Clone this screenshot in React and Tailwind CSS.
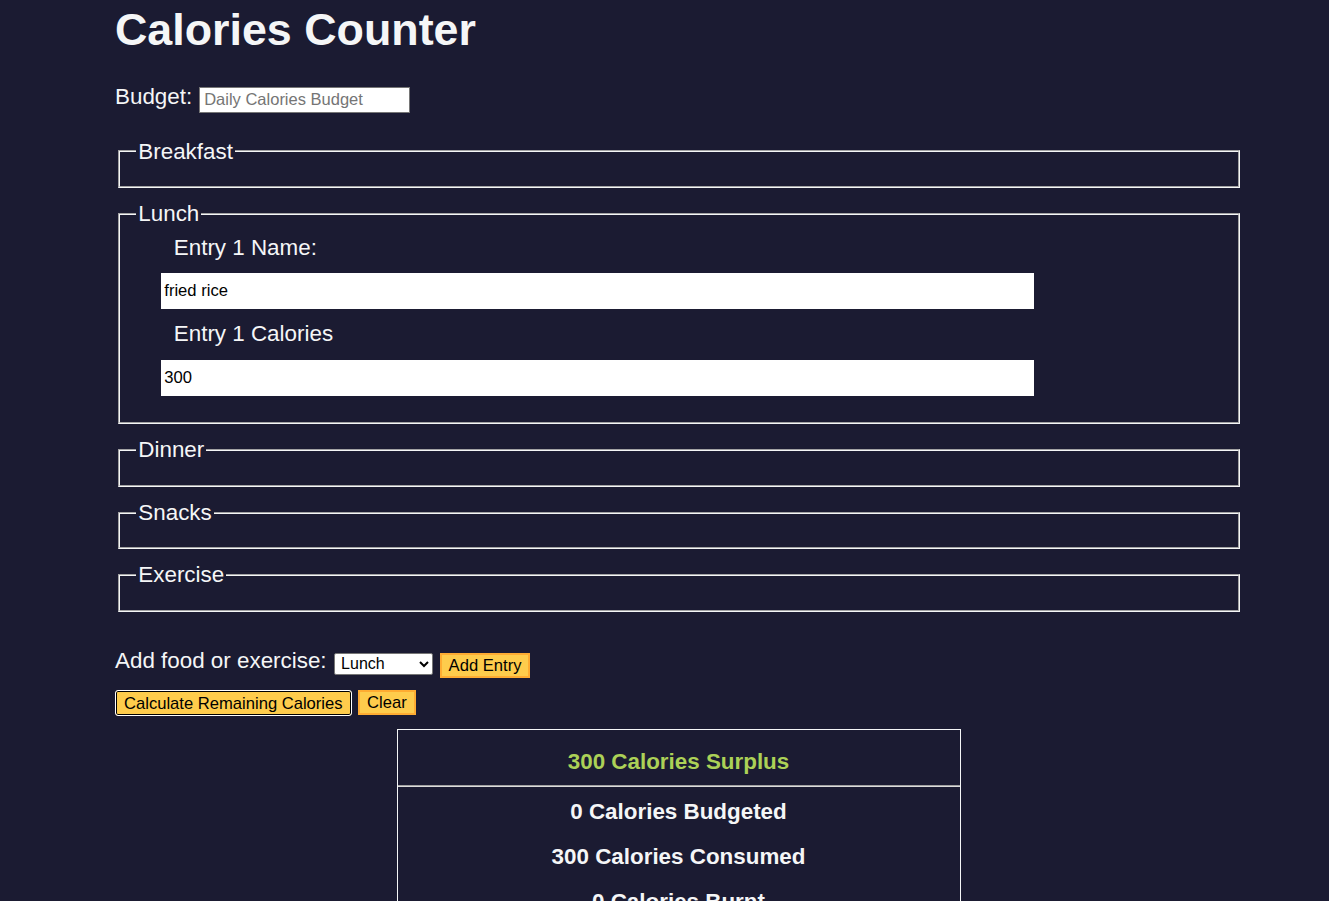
import React from "react";

function Section({ title, children }) {
  return (
    <fieldset className="mx-[2.5px] border-2 border-[#f5f6f7] [border-style:groove] pt-[7.84px] pb-[14px] px-[16.8px]">
      <legend className="px-[2px] text-[22.4px] leading-[25.76px]">{title}</legend>
      {children}
    </fieldset>
  );
}

export default function App() {
  return (
    <div
      className="min-h-screen bg-[#1b1b32] text-[#f5f6f7] overflow-hidden"
      style={{ fontFamily: '"Liberation Sans", Arial, sans-serif' }}
    >
      <div className="ml-[115px] w-[1127px] pb-[40px]">
        <h1 className="mt-[3.5px] text-[44.8px] leading-[51.5px] font-bold">Calories Counter</h1>

        <div className="mt-[28.5px] flex items-start">
          <label className="text-[22.4px] leading-[25.76px]">Budget:</label>
          <input
            type="number"
            placeholder="Daily Calories Budget"
            className="ml-[7px] mt-[3px] w-[211px] h-[26px] bg-white text-black border border-[#767676] px-[4px] text-[16.5px] leading-[19px] placeholder:text-[#757575] outline-none"
          />
        </div>

        <div className="mt-[26px] flex flex-col gap-[13px]">
          <Section title="Breakfast" />
          <Section title="Lunch">
            <div className="flex flex-col">
              <label className="ml-[37.5px] text-[22.4px] leading-[25.76px]">Entry 1 Name:</label>
              <input
                type="text"
                defaultValue="fried rice"
                className="ml-[25px] my-[12.5px] w-[873px] h-[36px] bg-white text-black px-[3px] text-[16.6px] outline-none"
              />
              <label className="ml-[37.5px] text-[22.4px] leading-[25.76px]">Entry 1 Calories</label>
              <input
                type="number"
                defaultValue="300"
                className="ml-[25px] my-[12.5px] w-[873px] h-[36px] bg-white text-black px-[3px] text-[16.6px] outline-none [appearance:textfield]"
              />
            </div>
          </Section>
          <Section title="Dinner" />
          <Section title="Snacks" />
          <Section title="Exercise" />
        </div>

        <div className="mt-[35.5px] flex items-start">
          <label className="text-[22.4px] leading-[25.76px]">Add food or exercise:</label>
          <select
            defaultValue="lunch"
            className="ml-[7.5px] mt-[5px] w-[99px] h-[22.5px] bg-white text-black border border-[#767676] rounded-[2px] pl-[2px] text-[16px] outline-none"
          >
            <option value="breakfast">Breakfast</option>
            <option value="lunch">Lunch</option>
            <option value="dinner">Dinner</option>
            <option value="snacks">Snacks</option>
            <option value="exercise">Exercise</option>
          </select>
          <button className="ml-[6.5px] mt-[5px] h-[25px] bg-[#fecc4c] border-2 border-[#feac32] px-[7px] text-black text-[16.6px] leading-[19px]">
            Add Entry
          </button>
        </div>

        <div className="mt-[12.5px] flex items-start">
          <button className="h-[26px] bg-[#fecc4c] border border-white rounded-[3px] shadow-[inset_0_0_0_1px_#000] px-[8px] text-black text-[16.6px] leading-[19px]">
            Calculate Remaining Calories
          </button>
          <button className="ml-[6.5px] h-[25px] bg-[#fecc4c] border-2 border-[#feac32] px-[7px] text-black text-[16.6px] leading-[19px]">
            Clear
          </button>
        </div>

        <div className="mx-auto mt-[13px] w-[564px] border border-[#f5f6f7] text-center font-bold text-[22.4px] leading-[25.76px]">
          <div className="pt-[19px] text-[#acd157]">300 Calories Surplus</div>
          <div className="mt-[10.5px] h-[2px] border-t border-t-[#a0a0a0] bg-[#dcdcdc]" />
          <div className="mt-[12px] flex flex-col gap-[19.3px] pb-[22px]">
            <p>0 Calories Budgeted</p>
            <p>300 Calories Consumed</p>
            <p>0 Calories Burnt</p>
          </div>
        </div>
      </div>
    </div>
  );
}
